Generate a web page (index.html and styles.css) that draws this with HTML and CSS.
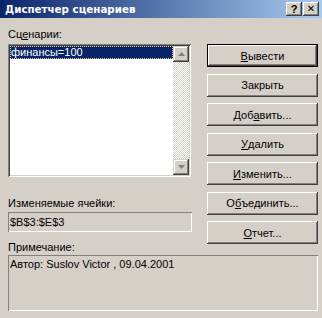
FILE: index.html
```html
<!DOCTYPE html>
<html lang="ru">
<head>
<meta charset="utf-8">
<title>Диспетчер сценариев</title>
<link rel="stylesheet" href="styles.css">
</head>
<body>
<div class="window">
  <div class="titlebar">
    <span class="title">Диспетчер сценариев</span>
    <div class="tb-buttons">
      <span class="tb-btn">?</span>
      <span class="tb-btn tb-close">✕</span>
    </div>
  </div>
  <div class="content">
    <div class="grid">
      <div class="left">
        <div class="label">Сц<u>е</u>нарии:</div>
        <div class="listbox">
          <div class="items">
            <div class="item selected"><span>финансы=100</span></div>
          </div>
          <div class="scrollbar">
            <div class="sb-btn"><svg width="7" height="4" viewBox="0 0 7 4"><polygon points="3.5,0 7,4 0,4" fill="#808080"/></svg></div>
            <div class="sb-track"></div>
            <div class="sb-btn"><svg width="7" height="4" viewBox="0 0 7 4"><polygon points="0,0 7,0 3.5,4" fill="#808080"/></svg></div>
          </div>
        </div>
        <div class="label label-cells">Изменяемые ячейки:</div>
        <div class="field">$B$3:$E$3</div>
        <div class="label label-note">Примечание:</div>
      </div>
      <div class="buttons">
        <div class="btn default"><u>В</u>ывести</div>
        <div class="btn">Закрыть</div>
        <div class="btn">Доб<u>а</u>вить...</div>
        <div class="btn"><u>У</u>далить</div>
        <div class="btn"><u>И</u>зменить...</div>
        <div class="btn">О<u>б</u>ъединить...</div>
        <div class="btn"><u>О</u>тчет...</div>
      </div>
    </div>
    <div class="note">Автор: Suslov Victor , 09.04.2001</div>
  </div>
</div>
</body>
</html>
```

FILE: styles.css
```css
html, body {
  margin: 0;
  padding: 0;
}
body {
  width: 322px;
  height: 318px;
  overflow: hidden;
  background: #d4d0c8;
  font-family: "Liberation Sans", "DejaVu Sans", sans-serif;
  font-size: 11px;
  color: #000;
}
.window {
  width: 322px;
  height: 318px;
}
.titlebar {
  height: 18px;
  display: flex;
  align-items: center;
  justify-content: space-between;
  background: linear-gradient(to right, #0a246a, #a6caf0);
  padding: 0 3px 0 5px;
  box-sizing: border-box;
}
.title {
  color: #fff;
  font-family: "DejaVu Sans", sans-serif;
  font-weight: bold;
  font-size: 10.3px;
  line-height: 18px;
}
.tb-buttons {
  display: flex;
  gap: 1px;
  align-self: flex-start;
  margin-top: 2px;
}
.tb-btn {
  width: 16px;
  height: 14px;
  background: #d4d0c8;
  box-shadow: inset -1px -1px #404040, inset 1px 1px #fff, inset -2px -2px #808080, inset 2px 2px #d4d0c8;
  display: flex;
  align-items: center;
  justify-content: center;
  font-weight: bold;
  font-size: 11px;
  line-height: 14px;
}
.tb-close {
  font-size: 10px;
}
.content {
  padding: 10px 4px 0 8px;
}
.grid {
  display: grid;
  grid-template-columns: 184px 111px;
  column-gap: 15px;
}
.label {
  height: 13px;
  line-height: 13px;
  white-space: nowrap;
}
.listbox {
  margin-top: 3px;
  width: 183px;
  height: 133px;
  box-sizing: border-box;
  background: #fff;
  box-shadow: inset 1px 1px #808080, inset -1px -1px #fff, inset 2px 2px #404040, inset -2px -2px #d4d0c8;
  padding: 2px;
  display: flex;
}
.items {
  flex: 1;
}
.item {
  height: 13px;
  line-height: 13px;
  padding-left: 1px;
  white-space: nowrap;
}
.item.selected {
  background: #0a246a;
  color: #fff;
  outline: 1px dotted #e8d080;
  outline-offset: -1px;
}
.scrollbar {
  width: 16px;
  display: flex;
  flex-direction: column;
}
.sb-btn {
  width: 16px;
  height: 16px;
  background: #d4d0c8;
  box-shadow: inset -1px -1px #404040, inset 1px 1px #d4d0c8, inset -2px -2px #808080, inset 2px 2px #fff;
  display: flex;
  align-items: center;
  justify-content: center;
}
.sb-track {
  flex: 1;
  background-image: conic-gradient(#fff 25%, #d4d0c8 0 50%, #fff 0 75%, #d4d0c8 0);
  background-size: 2px 2px;
}
.label-cells {
  margin-top: 20px;
}
.field {
  margin-top: 2px;
  width: 184px;
  height: 20px;
  box-sizing: border-box;
  line-height: 20px;
  padding-left: 2px;
  box-shadow: inset 1px 1px #808080, inset -1px -1px #fff;
}
.label-note {
  margin-top: 9px;
}
.buttons {
  display: flex;
  flex-direction: column;
  gap: 6.5px;
}
.btn {
  height: 23px;
  box-sizing: border-box;
  display: flex;
  align-items: center;
  justify-content: center;
  background: #d4d0c8;
  box-shadow: inset -1px -1px #404040, inset 1px 1px #fff, inset -2px -2px #808080, inset 2px 2px #d4d0c8;
  flex: none;
}
.btn:first-child {
  margin-top: 16px;
}
.btn.default {
  box-shadow: inset 0 0 0 1px #000, inset -2px -2px #404040, inset 2px 2px #fff, inset -3px -3px #808080;
}
.note {
  margin-top: 1px;
  width: 310px;
  height: 56px;
  box-sizing: border-box;
  padding: 3px 2px;
  line-height: 13px;
  box-shadow: inset 1px 1px #808080, inset -1px -1px #fff;
}
```
